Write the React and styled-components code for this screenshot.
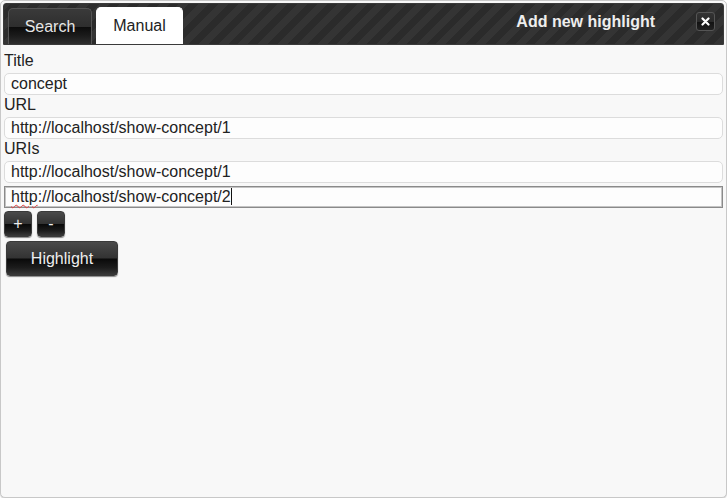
import React from "react";
import styled, { createGlobalStyle } from "styled-components";

const Global = createGlobalStyle`
  html, body { margin: 0; padding: 0; background: #ffffff; }
  body { font-family: "Liberation Sans", Arial, sans-serif; }
`;

const Dialog = styled.div`
  box-sizing: border-box;
  width: 727px;
  height: 498px;
  background: #f8f8f8;
  border: 1px solid #c8c8c8;
  border-radius: 5px;
  box-shadow: 0 1px 1px #d4d4d4;
  padding: 2px 2px;
  display: flex;
  flex-direction: column;
`;

const Header = styled.div`
  box-sizing: border-box;
  height: 42px;
  display: flex;
  align-items: flex-end;
  padding: 0 6px 0 4px;
  border: 1px solid #3a3a3a;
  border-radius: 3px 3px 0 0;
  background: repeating-linear-gradient(
    -45deg,
    #343434 0px,
    #343434 7px,
    #2b2b2b 7px,
    #2b2b2b 14px
  );
  position: relative;
`;

const Tabs = styled.div`
  display: flex;
  gap: 4px;
  align-items: flex-end;
`;

const Tab = styled.div`
  box-sizing: border-box;
  width: ${(p) => p.$w}px;
  height: ${(p) => (p.$active ? "37px" : "36px")};
  display: flex;
  align-items: center;
  justify-content: center;
  font-size: 16px;
  border-radius: 5px 5px 0 0;
  border: 1px solid ${(p) => (p.$active ? "#ffffff" : "#555")};
  border-bottom: none;
  color: ${(p) => (p.$active ? "#222" : "#e6e6e6")};
  background: ${(p) =>
    p.$active
      ? "#ffffff"
      : "linear-gradient(to bottom, #3a3a3a 0%, #2e2e2e 50%, #0c0c0c 52%, #1a1a1a 75%, #2e2e2e 100%)"};
`;

const Title = styled.div`
  position: absolute;
  right: 68px;
  top: 9px;
  font-weight: bold;
  font-size: 16px;
  color: #eeeeee;
`;

const Close = styled.button`
  position: absolute;
  right: 8px;
  top: 8px;
  width: 19px;
  height: 19px;
  padding: 0;
  border: 1px solid #555;
  border-radius: 3px;
  background: linear-gradient(to bottom, #333 0%, #2a2a2a 50%, #111 52%, #222 100%);
  display: flex;
  align-items: center;
  justify-content: center;
`;

const Body = styled.div`
  display: flex;
  flex-direction: column;
  padding: 7px 1px 0 1px;
`;

const Label = styled.div`
  font-size: 16px;
  color: #222;
  line-height: 18px;
  height: 18px;
`;

const Field = styled.div`
  box-sizing: border-box;
  height: 22px;
  margin-top: ${(p) => (p.$focus ? "2px" : "3px")};
  margin-bottom: 1px;
  padding: 0 6px;
  font-size: 16px;
  color: #222;
  line-height: 20px;
  border: 1px solid ${(p) => (p.$focus ? "#8a8a8a" : "#dcdcdc")};
  border-radius: ${(p) => (p.$focus ? "0" : "5px")};
  background: #fdfdfd;
  box-shadow: ${(p) => (p.$focus ? "inset 0 0 0 1px #c4c4c4" : "none")};
  white-space: nowrap;
`;

const Squiggle = styled.span`
  text-decoration: underline wavy #e04040;
  text-decoration-thickness: 1px;
  text-underline-offset: 2px;
`;

const Caret = styled.span`
  display: inline-block;
  width: 1px;
  height: 17px;
  background: #111;
  vertical-align: -3px;
`;

const Row = styled.div`
  display: flex;
  gap: 5px;
  margin-top: ${(p) => p.$mt}px;
`;

const DarkButton = styled.button`
  box-sizing: border-box;
  width: ${(p) => p.$w}px;
  height: ${(p) => p.$h}px;
  margin-left: ${(p) => p.$ml || 0}px;
  border: 1px solid #3a3a3a;
  border-radius: 4px;
  color: #eeeeee;
  font-family: "Liberation Sans", Arial, sans-serif;
  font-size: ${(p) => p.$fs}px;
  padding: 0;
  background: linear-gradient(
    to bottom,
    #4a4a4a 0%,
    #333333 48%,
    #0a0a0a 52%,
    #1c1c1c 78%,
    #3a3a3a 100%
  );
  box-shadow: 0 1px 1px #888;
`;

export default function App() {
  return (
    <>
      <Global />
      <Dialog>
        <Header>
          <Tabs>
            <Tab $w={84}>Search</Tab>
            <Tab $w={87} $active>Manual</Tab>
          </Tabs>
          <Title>Add new highlight</Title>
          <Close aria-label="close">
            <svg width="9" height="9" viewBox="0 0 9 9">
              <path d="M1.5 1.5 L7.5 7.5 M7.5 1.5 L1.5 7.5" stroke="#fff" strokeWidth="2.2" strokeLinecap="round" />
            </svg>
          </Close>
        </Header>
        <Body>
          <Label>Title</Label>
          <Field>concept</Field>
          <Label>URL</Label>
          <Field>http://localhost/show-concept/1</Field>
          <Label>URIs</Label>
          <Field>http://localhost/show-concept/1</Field>
          <Field $focus>
            <Squiggle>http</Squiggle>://localhost/show-concept/2<Caret />
          </Field>
          <Row $mt={2}>
            <DarkButton $w={28} $h={26} $fs={16}>+</DarkButton>
            <DarkButton $w={28} $h={26} $fs={16}>-</DarkButton>
          </Row>
          <Row $mt={4}>
            <DarkButton $w={112} $h={35} $fs={16} $ml={2}>Highlight</DarkButton>
          </Row>
        </Body>
      </Dialog>
    </>
  );
}
